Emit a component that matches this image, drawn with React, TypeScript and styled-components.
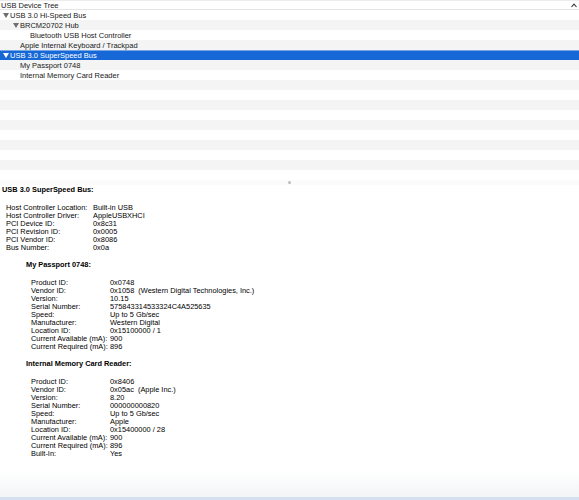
import React from 'react';
import styled, { createGlobalStyle } from 'styled-components';

const GlobalStyle = createGlobalStyle`
    html, body {
        margin: 0;
        padding: 0;
        background: #ffffff;
    }
    body {
        font-family: "Liberation Sans", Arial, sans-serif;
        -webkit-font-smoothing: antialiased;
    }
`;

const Window = styled.div`
    width: 579px;
    height: 500px;
    display: flex;
    flex-direction: column;
    overflow: hidden;
    background: #ffffff;
`;

const TreePane = styled.div`
    display: flex;
    flex-direction: column;
    height: 180px;
    flex-shrink: 0;
`;

const TreeHeader = styled.div`
    height: 10px;
    box-sizing: border-box;
    display: flex;
    align-items: center;
    justify-content: space-between;
    padding: 0 2px 0 1px;
    border-top: 1px solid #ececec;
    border-bottom: 1px solid #e4e4e4;
    font-size: 7.5px;
    color: #1a1a1a;
`;

const TreeRow = styled.div<{ $stripe: boolean; $selected?: boolean; $level: number }>`
    height: 10px;
    box-sizing: border-box;
    display: flex;
    align-items: center;
    padding-left: ${p => 3 + p.$level * 10}px;
    font-size: 7.5px;
    color: ${p => (p.$selected ? '#ffffff' : '#1a1a1a')};
    background: ${p => (p.$selected ? '#1668d6' : p.$stripe ? '#f4f4f4' : '#ffffff')};
    border-top: ${p => (p.$selected ? '1px solid #79a6e4' : 'none')};
    white-space: nowrap;
`;

const Disclosure = styled.span<{ $selected?: boolean }>`
    display: inline-block;
    width: 0;
    height: 0;
    border-left: 3px solid transparent;
    border-right: 3px solid transparent;
    border-top: 5px solid ${p => (p.$selected ? '#ffffff' : '#6e6e6e')};
    margin-right: 1px;
`;

const Spacer = styled.span`
    display: inline-block;
    width: 7px;
`;

const Divider = styled.div`
    height: 5px;
    flex-shrink: 0;
    display: flex;
    align-items: center;
    justify-content: center;
    background: #fbfbfb;
`;

const Dimple = styled.span`
    width: 3px;
    height: 3px;
    border-radius: 50%;
    background: #bdbdbd;
`;

const DetailPane = styled.div`
    flex: 1;
    padding: 0 0 0 2px;
    font-size: 7.4px;
    line-height: 8px;
    color: #000000;
    background: linear-gradient(#ffffff 0%, #ffffff 92%, #f2f4f6 100%);
`;

const SectionTitle = styled.div<{ $indent: number }>`
    font-weight: bold;
    margin-left: ${p => p.$indent}px;
`;

const PropList = styled.div<{ $indent: number; $labelWidth: number }>`
    display: grid;
    grid-template-columns: ${p => p.$labelWidth}px auto;
    margin: 10px 0 10px ${p => p.$indent}px;
    white-space: pre;
`;

const Device = styled.div`
    margin-top: -1px;
`;

const BusBlock = styled.div`
    padding-top: 1px;
`;

const BottomBar = styled.div`
    height: 3px;
    flex-shrink: 0;
    background: #d5e1ef;
`;

type Prop = [string, string];

const busProps: Prop[] = [
    ['Host Controller Location:', 'Built-in USB'],
    ['Host Controller Driver:', 'AppleUSBXHCI'],
    ['PCI Device ID:', '0x8c31'],
    ['PCI Revision ID:', '0x0005'],
    ['PCI Vendor ID:', '0x8086'],
    ['Bus Number:', '0x0a'],
];

const passportProps: Prop[] = [
    ['Product ID:', '0x0748'],
    ['Vendor ID:', '0x1058  (Western Digital Technologies, Inc.)'],
    ['Version:', '10.15'],
    ['Serial Number:', '575843314533324C4A525635'],
    ['Speed:', 'Up to 5 Gb/sec'],
    ['Manufacturer:', 'Western Digital'],
    ['Location ID:', '0x15100000 / 1'],
    ['Current Available (mA):', '900'],
    ['Current Required (mA):', '896'],
];

const readerProps: Prop[] = [
    ['Product ID:', '0x8406'],
    ['Vendor ID:', '0x05ac  (Apple Inc.)'],
    ['Version:', '8.20'],
    ['Serial Number:', '000000000820'],
    ['Speed:', 'Up to 5 Gb/sec'],
    ['Manufacturer:', 'Apple'],
    ['Location ID:', '0x15400000 / 28'],
    ['Current Available (mA):', '900'],
    ['Current Required (mA):', '896'],
    ['Built-In:', 'Yes'],
];

interface TreeItem {
    label: string;
    level: number;
    expandable?: boolean;
    selected?: boolean;
}

const treeItems: TreeItem[] = [
    { label: 'USB 3.0 Hi-Speed Bus', level: 0, expandable: true },
    { label: 'BRCM20702 Hub', level: 1, expandable: true },
    { label: 'Bluetooth USB Host Controller', level: 2 },
    { label: 'Apple Internal Keyboard / Trackpad', level: 1 },
    { label: 'USB 3.0 SuperSpeed Bus', level: 0, expandable: true, selected: true },
    { label: 'My Passport 0748', level: 1 },
    { label: 'Internal Memory Card Reader', level: 1 },
];

const EMPTY_ROWS = 10;

function CollapseIcon() {
    return (
        <svg width="6" height="5" viewBox="0 0 6 5">
            <path d="M0.5 4 L3 1.2 L5.5 4" fill="none" stroke="#333" strokeWidth="1.1" />
        </svg>
    );
}

function Props({ items, indent, labelWidth }: { items: Prop[]; indent: number; labelWidth: number }) {
    return (
        <PropList $indent={indent} $labelWidth={labelWidth}>
            {items.map(([k, v]) => (
                <React.Fragment key={k}>
                    <span>{k}</span>
                    <span>{v}</span>
                </React.Fragment>
            ))}
        </PropList>
    );
}

function App() {
    return (
        <Window>
            <GlobalStyle />
            <TreePane>
                <TreeHeader>
                    <span>USB Device Tree</span>
                    <CollapseIcon />
                </TreeHeader>
                {treeItems.map((item, i) => (
                    <TreeRow key={item.label} $stripe={i % 2 === 1} $selected={item.selected} $level={item.level}>
                        {item.expandable ? <Disclosure $selected={item.selected} /> : <Spacer />}
                        {item.label}
                    </TreeRow>
                ))}
                {Array.from({ length: EMPTY_ROWS }).map((_, i) => (
                    <TreeRow key={'empty' + i} $stripe={(treeItems.length + i) % 2 === 1} $level={0} />
                ))}
            </TreePane>
            <Divider>
                <Dimple />
            </Divider>
            <DetailPane>
                <BusBlock>
                    <SectionTitle $indent={0}>USB 3.0 SuperSpeed Bus:</SectionTitle>
                    <Props items={busProps} indent={4} labelWidth={87} />
                </BusBlock>
                <Device>
                    <SectionTitle $indent={24}>My Passport 0748:</SectionTitle>
                    <Props items={passportProps} indent={29} labelWidth={79} />
                </Device>
                <Device>
                    <SectionTitle $indent={24}>Internal Memory Card Reader:</SectionTitle>
                    <Props items={readerProps} indent={29} labelWidth={79} />
                </Device>
            </DetailPane>
            <BottomBar />
        </Window>
    );
}

export default App;
